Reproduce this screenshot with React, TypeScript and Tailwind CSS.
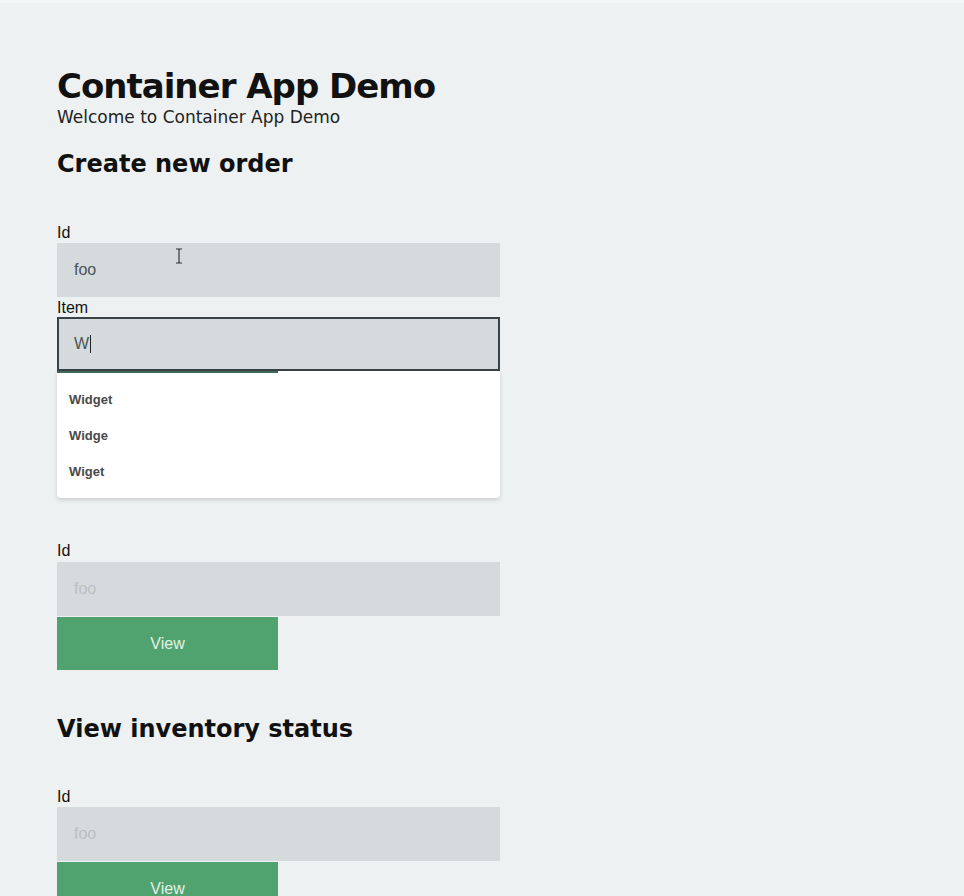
import React from "react";

const head = { fontFamily: '"DejaVu Sans", "Liberation Sans", sans-serif' };
const body = { fontFamily: '"Liberation Sans", Arial, sans-serif' };

function Label({ children, className = "" }: { children: React.ReactNode; className?: string }) {
  return (
    <div className={`text-[16px] leading-[18px] text-[#111] ${className}`} style={body}>
      {children}
    </div>
  );
}

function Input({ placeholder, className = "mt-[2px]" }: { placeholder: string; className?: string }) {
  return (
    <div
      className={`flex h-[54px] w-[443px] items-center bg-[#d5dbdd] pl-[17px] text-[16px] ${className}`}
      style={body}
    >
      <span className="text-[#b9c0c3]">{placeholder}</span>
    </div>
  );
}

function ViewButton() {
  return (
    <div
      className="mt-px flex h-[53px] w-[221px] items-center justify-center bg-[#50a36e] text-[16px] text-[#e4f1e8]"
      style={body}
    >
      View
    </div>
  );
}

export default function App() {
  return (
    <div className="min-h-[896px] w-full overflow-hidden bg-[#eef1f2] pl-[57px]">
      <div className="h-[3px] -ml-[57px] bg-[#f4f5f5]" />
      <div className="pt-[65px]">
        <h1
          className="text-[34px] font-bold leading-[36px] tracking-[-1px] text-[#111]"
          style={head}
        >
          Container App Demo
        </h1>
        <div className="mt-[4px] text-[17px] leading-[18px] text-[#222]" style={head}>
          Welcome to Container App Demo
        </div>
        <h2 className="mt-[24px] text-[24px] font-bold leading-[28px] text-[#111]" style={head}>
          Create new order
        </h2>

        <div className="mt-[46px]">
          <Label>Id</Label>
          <div className="relative">
            <div
              className="mt-px flex h-[54px] w-[443px] items-center bg-[#d5dbdd] pl-[17px] text-[16px]"
              style={body}
            >
              <span className="text-[#4d5457]">foo</span>
            </div>
            <svg
              className="absolute left-[118px] top-[5px]"
              width="8"
              height="16"
              viewBox="0 0 8 16"
            >
              <path d="M1 1h6M4 1v14M1 15h6" stroke="#333" strokeWidth="1.2" fill="none" />
            </svg>
          </div>
          <Label className="mt-[2px]">Item</Label>
          <div className="relative">
            <div
              className="flex h-[54px] w-[443px] items-center border-2 border-[#3a4147] bg-[#d5dbdd] pl-[15px] text-[16px]"
              style={body}
            >
              <span className="text-[#4d5457]">W</span>
              <span className="ml-px inline-block h-[18px] w-px bg-[#222]" />
            </div>
            <div className="absolute left-0 top-[54px] z-10 w-[443px] rounded-b-[4px] bg-white shadow-[0_2px_4px_rgba(0,0,0,0.15)]">
              <div className="h-[2px] w-[221px] bg-[#3f6b5a]" />
              <div className="pb-[8px] pt-[9px] text-[13px] font-bold text-[#4a4a4a]" style={body}>
                <div className="flex h-[36px] items-center pl-[12px]">Widget</div>
                <div className="flex h-[36px] items-center pl-[12px]">Widge</div>
                <div className="flex h-[36px] items-center pl-[12px]">Wiget</div>
              </div>
            </div>
          </div>
        </div>

        <div className="mt-[171px]">
          <Label>Id</Label>
          <Input placeholder="foo" />
          <ViewButton />
        </div>

        <h2 className="mt-[45px] text-[24px] font-bold leading-[28px] text-[#111]" style={head}>
          View inventory status
        </h2>

        <div className="mt-[45px]">
          <Label>Id</Label>
          <Input placeholder="foo" className="mt-px" />
          <ViewButton />
        </div>
      </div>
    </div>
  );
}
